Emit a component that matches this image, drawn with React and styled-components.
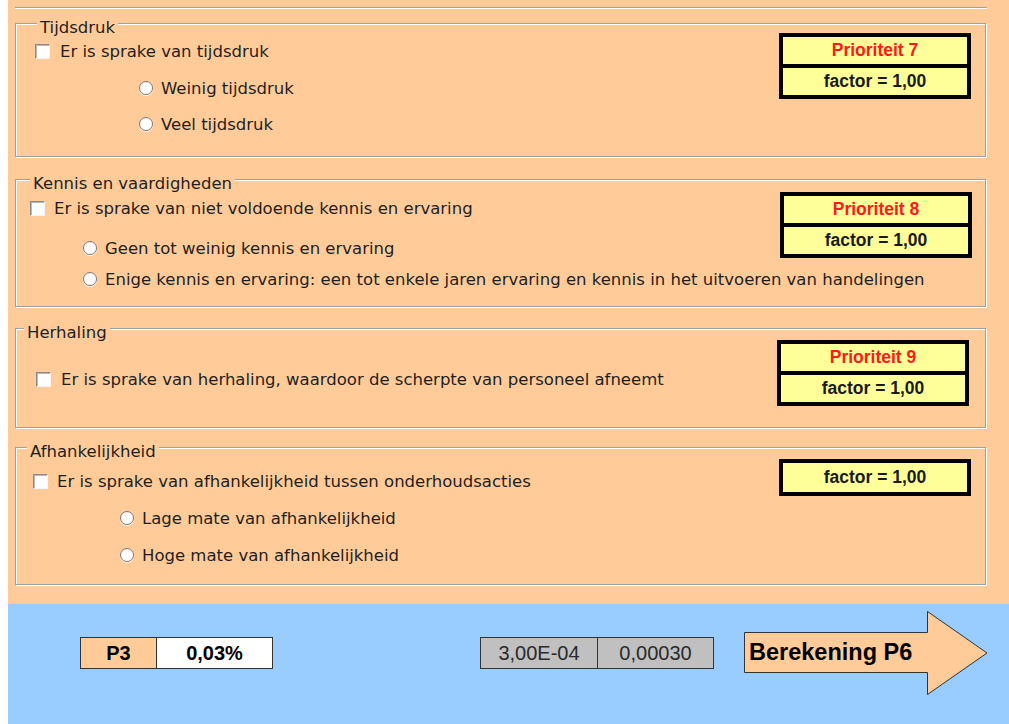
import React from 'react';
import styled, { createGlobalStyle } from 'styled-components';

const GlobalStyle = createGlobalStyle`
	html, body {
		margin: 0;
		padding: 0;
		overflow: hidden;
		background: #ffffff;
	}
	body {
		font-family: "DejaVu Sans", Verdana, sans-serif;
	}
`;

const Page = styled.div`
	margin-left: 8px;
	width: 1001px;
	height: 724px;
	display: flex;
	flex-direction: column;
	background-color: #ffcc99;
`;

const Main = styled.div`
	flex: 1;
	padding: 0 23px 0 7px;
	display: flex;
	flex-direction: column;
`;

const TopRule = styled.div`
	margin-top: 7px;
	height: 0;
	border-top: 1px solid #a0a0a0;
	box-shadow: 0 1px 0 #ffffff;
	margin-right: -1px;
`;

const Group = styled.div`
	position: relative;
	box-sizing: border-box;
	height: ${p => p.h}px;
	margin-top: ${p => p.gap}px;
	border: 1px solid #a0a0a0;
	box-shadow: inset 1px 1px 0 #ffffff, 1px 1px 0 #ffffff;
	display: flex;
	align-items: flex-start;
`;

const Caption = styled.span`
	position: absolute;
	top: -6px;
	left: ${p => p.left}px;
	padding: 0 3px;
	line-height: 20px;
	font-size: 16.5px;
	color: #1e1e1e;
	background-color: #ffcc99;
`;

const Options = styled.div`
	flex: 1;
	min-width: 0;
	display: flex;
	flex-direction: column;
	padding-top: ${p => p.top}px;
`;

const Row = styled.label`
	display: flex;
	align-items: center;
	height: 20px;
	margin-top: ${p => p.gap || 0}px;
	padding-left: ${p => p.indent}px;
	font-size: 16.5px;
	color: #1e1e1e;
	white-space: nowrap;
`;

const CheckBox = styled.span`
	box-sizing: border-box;
	flex-shrink: 0;
	width: 15px;
	height: 15px;
	margin-right: ${p => p.space}px;
	background: #ffffff;
	border-top: 1px solid #8a8a8a;
	border-left: 1px solid #8a8a8a;
	border-right: 1px solid #f4f4f4;
	border-bottom: 1px solid #f4f4f4;
	box-shadow: inset 1px 1px 0 #b8b8b8;
`;

const Radio = styled.span`
	box-sizing: border-box;
	flex-shrink: 0;
	width: 14px;
	height: 14px;
	margin-right: 8px;
	border-radius: 50%;
	border: 1px solid #7c7c7c;
	background: radial-gradient(circle at 55% 60%, #ffffff 55%, #e4e4e4 100%);
	box-shadow: 0 1px 0 rgba(255, 255, 255, 0.8);
`;

const PrioBox = styled.div`
	position: relative;
	flex-shrink: 0;
	width: 192px;
	box-sizing: border-box;
	margin-left: auto;
	margin-top: ${p => p.top}px;
	margin-right: ${p => p.right}px;
	border: 4px solid #000000;
	display: flex;
	flex-direction: column;
	gap: 4px;
	background-color: #000000;
`;

const PrioCell = styled.div`
	height: ${p => p.h || 27}px;
	display: flex;
	align-items: center;
	justify-content: center;
	background-color: #ffff99;
	font-family: "Liberation Sans", Arial, sans-serif;
	font-weight: bold;
	font-size: 17.5px;
	color: ${p => (p.red ? '#ff1a1a' : '#1a1a1a')};
`;

const Footer = styled.div`
	height: 120px;
	background-color: #99ccff;
	display: flex;
	align-items: flex-start;
	padding-left: 72px;
	margin-top: 19px;
`;

const ResultBox = styled.div`
	display: flex;
	margin-top: ${p => p.top}px;
	margin-left: ${p => p.left || 0}px;
	border: 1px solid #333333;
	height: ${p => p.h}px;
	box-sizing: border-box;
`;

const ResultCell = styled.div`
	width: ${p => p.w}px;
	display: flex;
	align-items: center;
	justify-content: center;
	background-color: ${p => p.bg};
	font-family: "Liberation Sans", Arial, sans-serif;
	font-weight: ${p => (p.bold ? 'bold' : 'normal')};
	font-size: 20px;
	color: ${p => (p.bold ? '#000000' : '#2a2a2a')};
	& + & {
		border-left: 1px solid #333333;
	}
`;

const ArrowButton = styled.div`
	position: relative;
	width: 244px;
	height: 84px;
	margin-top: 7px;
	margin-left: 30px;
	display: flex;
	align-items: center;
	cursor: pointer;

	svg {
		position: absolute;
		inset: 0;
	}
`;

const ArrowLabel = styled.span`
	position: relative;
	padding-left: 5px;
	margin-top: -2px;
	font-family: "Liberation Sans", Arial, sans-serif;
	font-weight: bold;
	font-size: 23.5px;
	color: #000000;
`;

const Prio = ({ label, top, right }) => (
	<PrioBox top={top} right={right}>
		{label && <PrioCell red>{label}</PrioCell>}
		<PrioCell h={label ? 27 : 29}>factor = 1,00</PrioCell>
	</PrioBox>
);

const Check = ({ indent, space = 9, children }) => (
	<Row indent={indent}>
		<CheckBox space={space} />
		{children}
	</Row>
);

const Option = ({ indent, gap, children }) => (
	<Row indent={indent} gap={gap}>
		<Radio />
		{children}
	</Row>
);

const App = () => {
	return (
		<>
			<GlobalStyle />
			<Page>
				<Main>
					<TopRule />

					<Group h={134} gap={15}>
						<Caption left={21}>Tijdsdruk</Caption>
						<Options top={17}>
							<Check indent={19} space={10}>Er is sprake van tijdsdruk</Check>
							<Option indent={123} gap={17}>Weinig tijdsdruk</Option>
							<Option indent={123} gap={16}>Veel tijdsdruk</Option>
						</Options>
						<Prio label="Prioriteit 7" top={9} right={14} />
					</Group>

					<Group h={128} gap={22}>
						<Caption left={14}>Kennis en vaardigheden</Caption>
						<Options top={18}>
							<Check indent={14} space={9}>Er is sprake van niet voldoende kennis en ervaring</Check>
							<Option indent={67} gap={20}>Geen tot weinig kennis en ervaring</Option>
							<Option indent={67} gap={11}>Enige kennis en ervaring: een tot enkele jaren ervaring en kennis in het uitvoeren van handelingen</Option>
						</Options>
						<Prio label="Prioriteit 8" top={12} right={13} />
					</Group>

					<Group h={100} gap={21}>
						<Caption left={8}>Herhaling</Caption>
						<Options top={40}>
							<Check indent={20} space={10}>Er is sprake van herhaling, waardoor de scherpte van personeel afneemt</Check>
						</Options>
						<Prio label="Prioriteit 9" top={11} right={16} />
					</Group>

					<Group h={138} gap={19}>
						<Caption left={11}>Afhankelijkheid</Caption>
						<Options top={23}>
							<Check indent={17} space={9}>Er is sprake van afhankelijkheid tussen onderhoudsacties</Check>
							<Option indent={104} gap={17}>Lage mate van afhankelijkheid</Option>
							<Option indent={104} gap={17}>Hoge mate van afhankelijkheid</Option>
						</Options>
						<Prio top={11} right={14} />
					</Group>
				</Main>

				<Footer>
					<ResultBox top={33} h={32}>
						<ResultCell w={75} bg="#ffcc99" bold>P3</ResultCell>
						<ResultCell w={115} bg="#ffffff" bold>0,03%</ResultCell>
					</ResultBox>

					<ResultBox top={33} h={32} left={207}>
						<ResultCell w={116} bg="#c0c0c0">3,00E-04</ResultCell>
						<ResultCell w={115} bg="#c0c0c0">0,00030</ResultCell>
					</ResultBox>

					<ArrowButton>
						<svg width="244" height="84" viewBox="0 0 244 84">
							<polygon
								points="0.5,21.5 183.5,21.5 183.5,0.5 243,42 183.5,83.5 183.5,61.5 0.5,61.5"
								fill="#ffcc99"
								stroke="#333333"
								strokeWidth="1"
							/>
						</svg>
						<ArrowLabel>Berekening P6</ArrowLabel>
					</ArrowButton>
				</Footer>
			</Page>
		</>
	);
};

export default App;
